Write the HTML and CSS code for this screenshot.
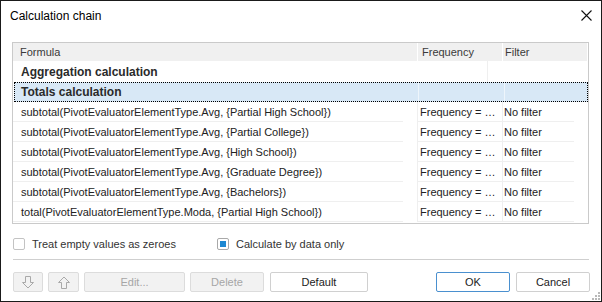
FILE: index.html
```html
<!DOCTYPE html>
<html lang="en">
<head>
  <meta charset="UTF-8">
  <title>Calculation chain</title>
  <link rel="stylesheet" href="styles.css">
</head>
<body>
  <div class="dialog">
    <div class="titlebar">
      <span class="title">Calculation chain</span>
      <svg class="close" width="11" height="11" viewBox="0 0 11 11">
        <path d="M0.5 0.5 L10.5 10.5 M10.5 0.5 L0.5 10.5" stroke="#111" stroke-width="1.1" fill="none"/>
      </svg>
    </div>

    <div class="body">
      <div class="grid">
        <div class="row head">
          <div class="cell">Formula</div>
          <div class="cell">Frequency</div>
          <div class="cell">Filter</div>
        </div>
        <div class="row group">
          <div class="cell">Aggregation calculation</div>
          <div class="cell"></div>
          <div class="cell"></div>
        </div>
        <div class="row group selected">
          <div class="cell">Totals calculation</div>
          <div class="cell"></div>
          <div class="cell"></div>
        </div>
        <div class="row item">
          <div class="cell">subtotal(PivotEvaluatorElementType.Avg, {Partial High School})</div>
          <div class="cell">Frequency = …</div>
          <div class="cell">No filter</div>
        </div>
        <div class="row item">
          <div class="cell">subtotal(PivotEvaluatorElementType.Avg, {Partial College})</div>
          <div class="cell">Frequency = …</div>
          <div class="cell">No filter</div>
        </div>
        <div class="row item">
          <div class="cell">subtotal(PivotEvaluatorElementType.Avg, {High School})</div>
          <div class="cell">Frequency = …</div>
          <div class="cell">No filter</div>
        </div>
        <div class="row item">
          <div class="cell">subtotal(PivotEvaluatorElementType.Avg, {Graduate Degree})</div>
          <div class="cell">Frequency = …</div>
          <div class="cell">No filter</div>
        </div>
        <div class="row item">
          <div class="cell">subtotal(PivotEvaluatorElementType.Avg, {Bachelors})</div>
          <div class="cell">Frequency = …</div>
          <div class="cell">No filter</div>
        </div>
        <div class="row item">
          <div class="cell">total(PivotEvaluatorElementType.Moda, {Partial High School})</div>
          <div class="cell">Frequency = …</div>
          <div class="cell">No filter</div>
        </div>
      </div>

      <div class="options">
        <label class="option first"><span class="check"></span>Treat empty values as zeroes</label>
        <label class="option"><span class="check on"></span>Calculate by data only</label>
      </div>

      <div class="separator"></div>

      <div class="buttons">
        <button class="btn icon" disabled>
          <svg width="12" height="13" viewBox="0 0 12 13"><path d="M3.5 0.5 H8.5 V6.5 H11.5 L6 12 L0.5 6.5 H3.5 Z" fill="none" stroke="#a9a9a9"/></svg>
        </button>
        <button class="btn icon" disabled>
          <svg width="12" height="13" viewBox="0 0 12 13"><path d="M3.5 12.5 H8.5 V6.5 H11.5 L6 1 L0.5 6.5 H3.5 Z" fill="none" stroke="#a9a9a9"/></svg>
        </button>
        <button class="btn edit" disabled>Edit...</button>
        <button class="btn delete" disabled>Delete</button>
        <button class="btn default">Default</button>
        <span class="spacer"></span>
        <button class="btn ok">OK</button>
        <button class="btn cancel">Cancel</button>
      </div>
    </div>

    <svg class="grip" width="11" height="11" viewBox="0 0 11 11">
      <rect x="8" y="2" width="2" height="2" fill="#b9b9b9"/>
      <rect x="5" y="5" width="2" height="2" fill="#b9b9b9"/>
      <rect x="8" y="5" width="2" height="2" fill="#b9b9b9"/>
      <rect x="2" y="8" width="2" height="2" fill="#b9b9b9"/>
      <rect x="5" y="8" width="2" height="2" fill="#b9b9b9"/>
      <rect x="8" y="8" width="2" height="2" fill="#b9b9b9"/>
    </svg>
  </div>
</body>
</html>
```

FILE: styles.css
```css
body {
  margin: 0;
  font-family: "Liberation Sans", Arial, sans-serif;
  color: #222;
}

.dialog {
  position: relative;
  width: 602px;
  height: 302px;
  box-sizing: border-box;
  border: 1px solid #1a1a1a;
  background: #fff;
}

.titlebar {
  height: 29px;
  display: flex;
  align-items: center;
  justify-content: space-between;
  padding: 0 9px 0 9px;
}
.title {
  font-size: 12px;
  color: #000;
}

.body {
  padding: 12px 12px 0 11px;
}

/* table */
.grid {
  border: 1px solid #cacaca;
  height: 182px;
  box-sizing: border-box;
  font-size: 11px;
}
.row {
  display: grid;
  grid-template-columns: 404px 85px 1fr;
  height: 20px;
  align-items: stretch;
}
.cell {
  position: relative;
  display: flex;
  align-items: center;
  white-space: nowrap;
  overflow: hidden;
}
.row.head {
  height: 18px;
  background: #f0f0f0;
  color: #3a3a3a;
  margin-right: 1px;
}
.row.head .cell:nth-child(1) { padding-left: 7px; }
.row.head .cell:nth-child(2) { padding-left: 4px; border-left: 1px solid #fff; }
.row.head .cell:nth-child(3) { padding-left: 2px; border-left: 1px solid #fff; }

.row.group {
  font-size: 12px;
  font-weight: bold;
  color: #2a2a2a;
}
.row.group .cell:nth-child(1) { padding-left: 8px; }
.row.group:not(.selected) { height: 21px; }
.row.group:not(.selected) .cell:nth-child(3) {
  border-left: 1px solid #efefef;
  margin-left: -15px;
}
.row.selected {
  box-sizing: border-box;
  margin-left: 1px;
  background: #d8e8f6;
  border: 1px dotted #000;
}
.row.selected .cell:nth-child(1) { padding-left: 6px; }
.row.selected .cell:nth-child(2),
.row.selected .cell:nth-child(3) {
  border-left: 1px solid #eef5fb;
}
.row.selected .cell:nth-child(2) { margin-left: -1px; }

.row.item .cell:nth-child(1) { padding-left: 8px; }
.row.item .cell:nth-child(2) { padding-left: 2px; border-left: 1px solid #efefef; }
.row.item .cell:nth-child(3) { padding-left: 1px; border-left: 1px solid #efefef; }
.row.item .cell::after {
  content: "";
  position: absolute;
  left: 0;
  right: 14px;
  bottom: 0;
  border-bottom: 1px solid #efefef;
}
.row.item .cell:nth-child(2)::after { right: 0; }

/* checkboxes */
.options {
  display: flex;
  align-items: center;
  margin-top: 14px;
  padding-left: 1px;
  height: 12px;
  font-size: 11px;
  color: #333;
}
.option {
  display: flex;
  align-items: center;
  gap: 7px;
}
.option.first { width: 204px; }
.check {
  width: 12px;
  height: 12px;
  box-sizing: border-box;
  border: 1px solid #c3c3c3;
  border-radius: 2px;
  background: #fff;
  padding: 2px;
}
.check.on {
  border-color: #a9a9a9;
}
.check.on::before {
  content: "";
  display: block;
  width: 6px;
  height: 6px;
  background: #1e88d2;
}

.separator {
  margin: 9px 0 0 1px;
  border-top: 1px solid #cfcfcf;
}

/* buttons */
.buttons {
  display: flex;
  gap: 5px;
  margin-top: 12px;
  padding-left: 1px;
}
.btn {
  height: 20px;
  box-sizing: border-box;
  border: 1px solid #d0d0d0;
  border-radius: 2px;
  background: #fff;
  font-family: inherit;
  font-size: 11px;
  color: #222;
  padding: 0;
  display: flex;
  align-items: center;
  justify-content: center;
}
.btn:disabled {
  background: #f2f2f2;
  border-color: #dcdcdc;
  color: #a6a6a6;
}
.btn.icon { width: 30px; }
.btn.icon + .btn.icon { width: 31px; }
.btn.edit { width: 101px; }
.btn.delete { width: 74px; }
.btn.default { width: 98px; margin-left: 1px; }
.spacer { flex: 1; }
.btn.ok {
  width: 74px;
  border-color: #4a90cf;
}
.btn.cancel { width: 74px; margin-left: 1px; margin-right: -1px; }

.grip {
  position: absolute;
  right: 0;
  bottom: 0;
}
```
